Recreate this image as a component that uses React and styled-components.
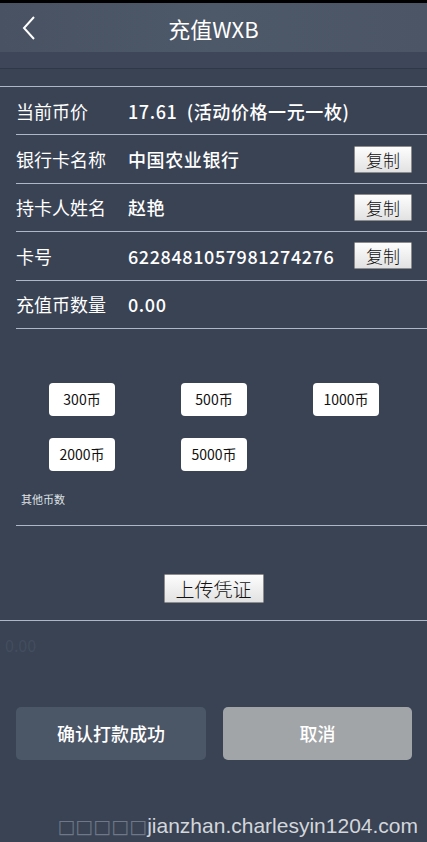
import React from "react";
import styled, { createGlobalStyle } from "styled-components";

// trang nạp tiền WXB: thông tin ngân hàng + chọn số coin

const GlobalStyle = createGlobalStyle`
  html, body {
    margin: 0;
    padding: 0;
    background: #394354;
  }
  body {
    font-family: "Noto Sans CJK SC", "Noto Sans", sans-serif;
    color: #fff;
  }
`;

const rows = [
  { label: "当前币价", value: "17.61  (活动价格一元一枚)" },
  { label: "银行卡名称", value: "中国农业银行", copy: true },
  { label: "持卡人姓名", value: "赵艳", copy: true },
  { label: "卡号", value: "6228481057981274276", copy: true },
  { label: "充值币数量", value: "0.00" },
];

const coins = ["300币", "500币", "1000币", "2000币", "5000币"];

export default function App() {
  return (
    <Page>
      <GlobalStyle />
      <StatusBar />
      <Header>
        <Back>
          <svg width="14" height="26" viewBox="0 0 14 26">
            <path d="M12 2 L2 13 L12 24" fill="none" stroke="#fff" strokeWidth="2" />
          </svg>
        </Back>
        <Title>充值WXB</Title>
      </Header>
      <SubBar />
      <Gap />
      <InfoList>
        {rows.map((r) => (
          <Row key={r.label}>
            <Label>{r.label}</Label>
            <Value>{r.value}</Value>
            {r.copy && <CopyButton>复制</CopyButton>}
          </Row>
        ))}
      </InfoList>

      <CoinGrid>
        {coins.map((c) => (
          <Cell key={c}>
            <Coin>{c}</Coin>
          </Cell>
        ))}
      </CoinGrid>
      <OtherLabel>其他币数</OtherLabel>
      <Divider />

      <UploadWrap>
        <UploadButton>上传凭证</UploadButton>
      </UploadWrap>
      <Ghost>0.00</Ghost>

      <Actions>
        <ActionButton>确认打款成功</ActionButton>
        <ActionButton cancel>取消</ActionButton>
      </Actions>

      <Watermark>
        <Tofu>□□□□□</Tofu>jianzhan.charlesyin1204.com
      </Watermark>
    </Page>
  );
}

const Page = styled.div`
  min-height: 842px;
  display: flex;
  flex-direction: column;
  background: #394354;
`;

const StatusBar = styled.div`
  height: 3px;
  background: #000;
`;

const Header = styled.div`
  position: relative;
  height: 49px;
  display: flex;
  align-items: center;
  justify-content: center;
  background: linear-gradient(90deg, #485262, #4d5868 50%, #4b5565);
`;

const Back = styled.div`
  position: absolute;
  left: 22px;
  top: 12px;
`;

const Title = styled.div`
  font-size: 22px;
  font-weight: 400;
  color: #fff;
`;

const SubBar = styled.div`
  height: 16px;
  background: #3d4759;
  border-bottom: 1px solid #2f3846;
`;

const Gap = styled.div`
  height: 17px;
  border-bottom: 1px solid #aeb7c7;
`;

const InfoList = styled.div`
  padding-left: 16px;
`;

const Row = styled.div`
  height: 47.4px;
  display: flex;
  align-items: center;
  border-bottom: 1px solid #aeb7c7;
`;

const Label = styled.div`
  width: 112px;
  font-size: 18px;
  color: #fff;
`;

const Value = styled.div`
  flex: 1;
  font-size: 18px;
  font-weight: 500;
  letter-spacing: 0.6px;
  color: #fff;
  white-space: pre;
`;

const CopyButton = styled.button`
  width: 58px;
  height: 27px;
  margin-right: 15px;
  padding: 0;
  font-family: "Noto Sans CJK SC", sans-serif;
  font-size: 17px;
  font-weight: 300;
  color: #111;
  background: linear-gradient(#fdfdfd, #e2e2e2);
  border: 1px solid #8d8d8d;
  border-radius: 1px;
`;

const CoinGrid = styled.div`
  display: grid;
  grid-template-columns: repeat(3, 132px);
  row-gap: 22px;
  margin: 54px 15px 0 16px;
`;

const Cell = styled.div`
  display: flex;
  justify-content: center;
`;

const Coin = styled.div`
  width: 66px;
  height: 33px;
  display: flex;
  align-items: center;
  justify-content: center;
  background: #fff;
  border-radius: 4px;
  font-size: 14px;
  color: #111;
`;

const OtherLabel = styled.div`
  margin: 20px 0 0 21px;
  font-size: 11px;
  line-height: 16px;
  color: #dfe2e6;
`;

const Divider = styled.div`
  margin: 18px 0 0 16px;
  border-bottom: 1px solid #aeb7c7;
`;

const UploadWrap = styled.div`
  display: flex;
  justify-content: center;
  padding: 48px 0 17px;
  border-bottom: 1px solid #aeb7c7;
`;

const UploadButton = styled.button`
  width: 100px;
  height: 29px;
  padding: 0;
  font-family: "Noto Sans CJK SC", sans-serif;
  font-size: 19px;
  font-weight: 300;
  color: #111;
  background: linear-gradient(#fdfdfd, #e2e2e2);
  border: 1px solid #8d8d8d;
  border-radius: 1px;
`;

const Ghost = styled.div`
  margin: 12px 0 0 5px;
  font-size: 16px;
  color: #434d5e;
`;

const Actions = styled.div`
  display: grid;
  grid-template-columns: 190px 189px;
  column-gap: 17px;
  margin: 50px 0 0 16px;
`;

const ActionButton = styled.button`
  height: 53px;
  border: none;
  border-radius: 5px;
  font-family: "Noto Sans CJK SC", sans-serif;
  font-size: 18px;
  font-weight: 500;
  color: #fff;
  background: ${(p) => (p.cancel ? "#a2a5a7" : "#4b5667")};
`;

const Watermark = styled.div`
  margin-top: auto;
  padding: 0 9px 3px 0;
  text-align: right;
  font-family: "Liberation Sans", sans-serif;
  font-size: 21px;
  line-height: 26px;
  color: #d3d6db;
`;

const Tofu = styled.span`
  font-family: "DejaVu Sans", sans-serif;
  font-size: 19px;
  color: #6f7888;
`;
